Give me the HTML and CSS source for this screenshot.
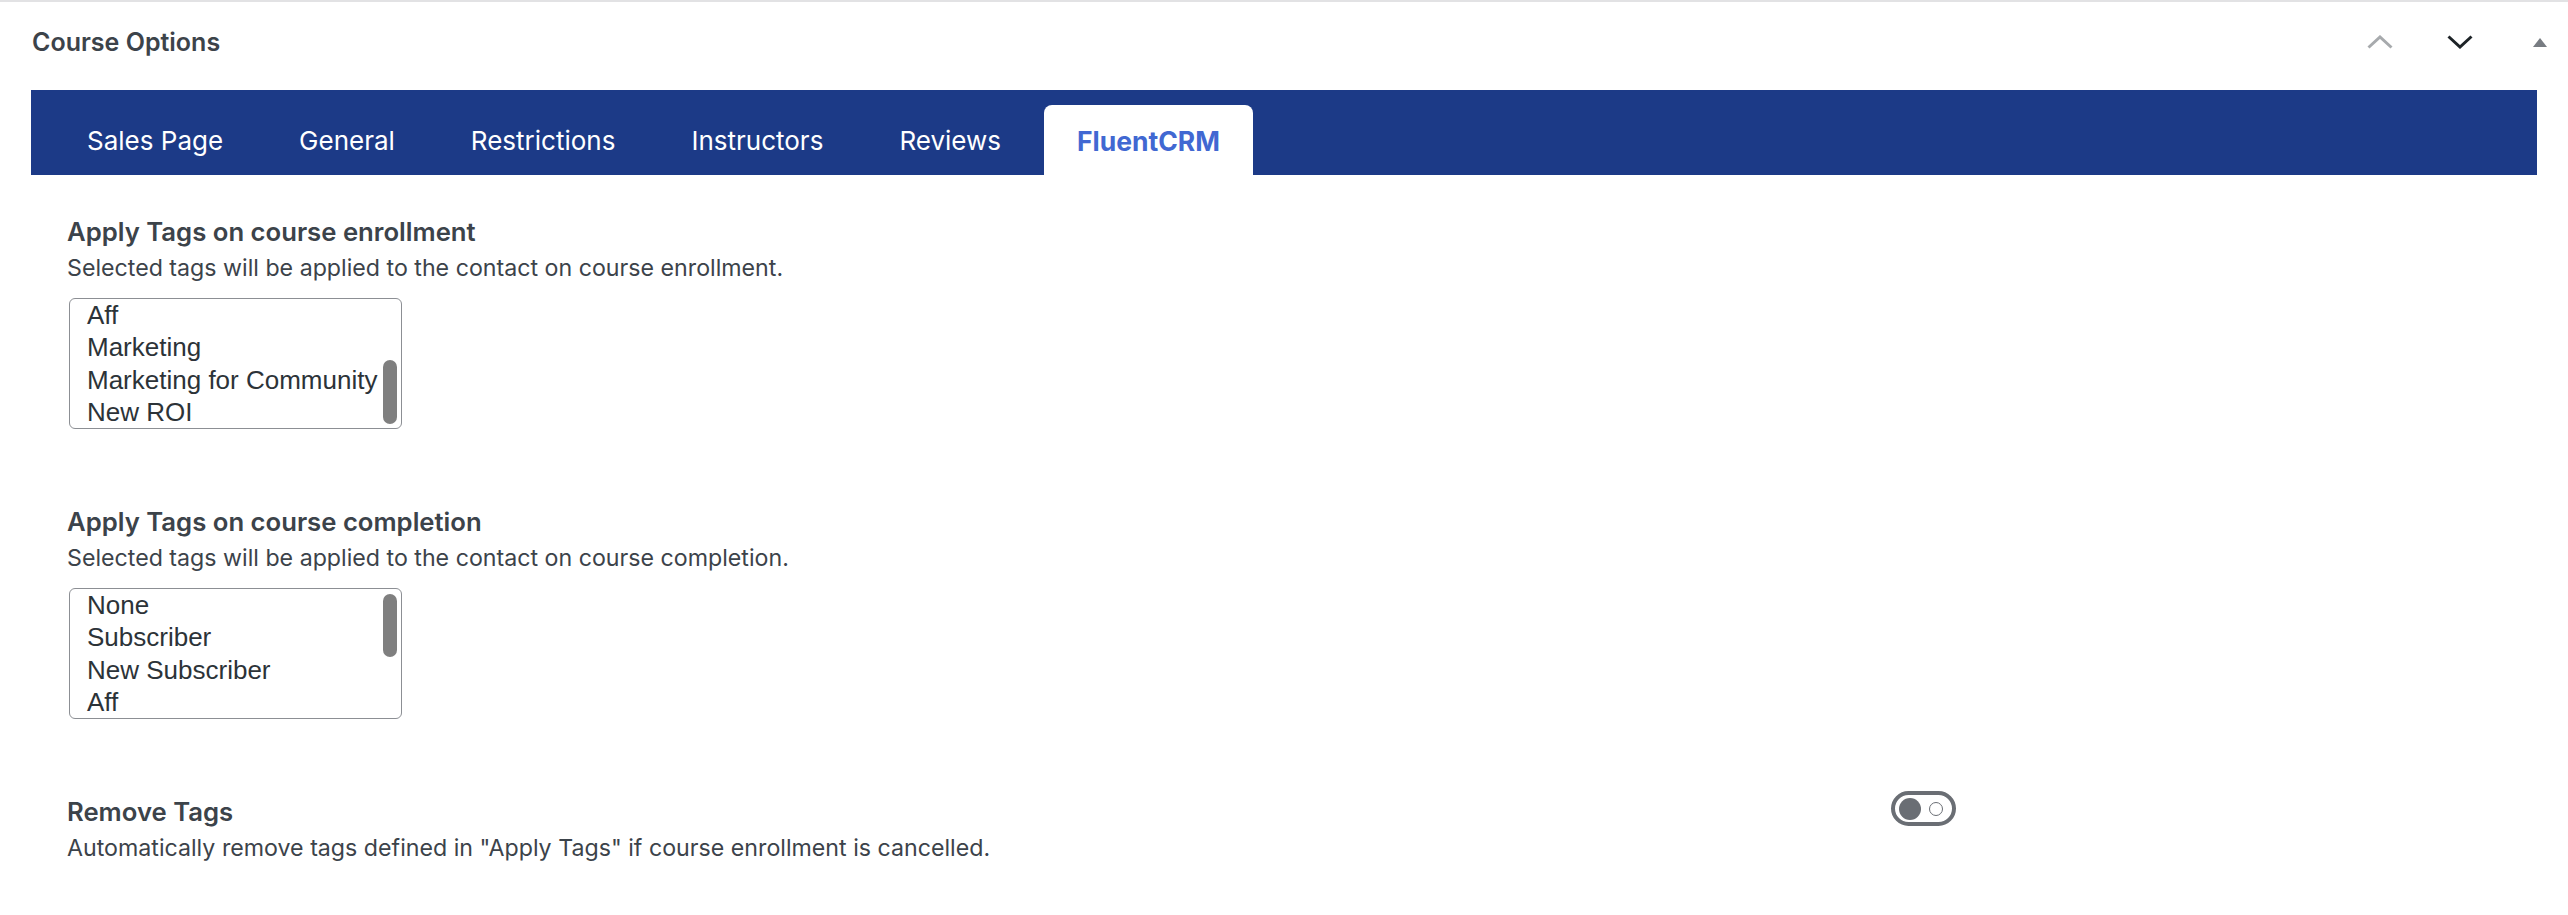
FILE: index.html
```html
<!DOCTYPE html>
<html lang="en">
<head>
<meta charset="utf-8">
<title>Course Options</title>
<link rel="stylesheet" href="styles.css">
</head>
<body>
<div class="postbox">
  <div class="postbox-header">
    <h2 class="hndle">Course Options</h2>
    <div class="handle-actions">
      <button class="handle-btn" type="button" aria-label="Move up">
        <svg width="26" height="14" viewBox="0 0 26 14"><path d="M1.5 12.5 L13 2 L24.5 12.5" fill="none" stroke="#a7aaad" stroke-width="3"/></svg>
      </button>
      <button class="handle-btn" type="button" aria-label="Move down">
        <svg width="26" height="14" viewBox="0 0 26 14"><path d="M1.5 1.5 L13 12 L24.5 1.5" fill="none" stroke="#1d2327" stroke-width="3"/></svg>
      </button>
      <button class="handle-btn" type="button" aria-label="Toggle panel">
        <svg width="14" height="9" viewBox="0 0 14 9"><path d="M0 9 L7 0 L14 9 Z" fill="#787c82"/></svg>
      </button>
    </div>
  </div>

  <div class="inside">
    <nav class="tabs">
      <a class="tab">Sales Page</a>
      <a class="tab">General</a>
      <a class="tab">Restrictions</a>
      <a class="tab">Instructors</a>
      <a class="tab">Reviews</a>
      <a class="tab active">FluentCRM</a>
    </nav>

    <div class="panel">
      <div class="field">
        <div class="field-main">
          <h3 class="field-title">Apply Tags on course enrollment</h3>
          <p class="field-desc">Selected tags will be applied to the contact on course enrollment.</p>
          <div class="listbox">
            <ul class="options">
              <li>Aff</li>
              <li>Marketing</li>
              <li>Marketing for Community</li>
              <li>New ROI</li>
            </ul>
            <span class="thumb" style="top:61px;height:64px"></span>
          </div>
        </div>
        <div class="field-side"></div>
      </div>

      <div class="field">
        <div class="field-main">
          <h3 class="field-title">Apply Tags on course completion</h3>
          <p class="field-desc">Selected tags will be applied to the contact on course completion.</p>
          <div class="listbox">
            <ul class="options">
              <li>None</li>
              <li>Subscriber</li>
              <li>New Subscriber</li>
              <li>Aff</li>
            </ul>
            <span class="thumb" style="top:5px;height:63px"></span>
          </div>
        </div>
        <div class="field-side"></div>
      </div>

      <div class="field">
        <div class="field-main">
          <h3 class="field-title">Remove Tags</h3>
          <p class="field-desc">Automatically remove tags defined in "Apply Tags" if course enrollment is cancelled.</p>
        </div>
        <div class="field-side">
          <span class="toggle" role="switch" aria-checked="false">
            <span class="toggle-knob"></span>
            <span class="toggle-ring"></span>
          </span>
        </div>
      </div>
    </div>
  </div>
</div>
</body>
</html>
```

FILE: styles.css
```css
* { box-sizing: border-box; }

html, body {
  margin: 0;
  padding: 0;
  background: #ffffff;
}

body {
  font-family: Inter, "Noto Sans", "Liberation Sans", sans-serif;
  color: #3c434a;
}

.postbox {
  border-top: 2px solid #e2e2e4;
}

/* Header row with the title and the move/collapse controls */
.postbox-header {
  height: 88px;
  display: flex;
  align-items: center;
  justify-content: space-between;
  padding: 0 0 8px 32px;
}

.hndle {
  margin: 0;
  font-size: 25px;
  font-weight: 600;
  color: #3c434a;
}

.handle-actions {
  display: flex;
  gap: 24px;
}

.handle-btn {
  width: 56px;
  height: 40px;
  padding: 0;
  border: 0;
  background: none;
  display: flex;
  align-items: center;
  justify-content: center;
}

.inside {
  padding: 0 31px;
}

/* Tab strip */
.tabs {
  height: 85px;
  background: #1c3a87;
  display: flex;
  align-items: flex-end;
  gap: 10px;
  padding: 0 23px;
}

.tab {
  height: 70px;
  line-height: 72px;
  padding: 0 33px;
  font-size: 26px;
  color: #ffffff;
  white-space: nowrap;
}

.tab.active {
  background: #ffffff;
  border-radius: 8px 8px 0 0;
  color: #4168d2;
  font-weight: 700;
  font-size: 26.5px;
}

/* Settings panel */
.panel {
  padding: 39px 36px 0;
}

.field {
  display: grid;
  grid-template-columns: 75% 25%;
  margin-bottom: 75px;
}

.field-title {
  margin: 0;
  font-size: 25.7px;
  line-height: 36px;
  font-weight: 600;
  color: #3c434a;
}

.field-desc {
  margin: 2px 0 0;
  font-size: 23.2px;
  line-height: 32px;
  color: #3c434a;
}

.listbox {
  position: relative;
  margin-top: 14px;
  margin-left: 2px;
  width: 333px;
  height: 131px;
  border: 1px solid #8c8f94;
  border-radius: 6px;
  overflow: hidden;
}

.options {
  list-style: none;
  margin: 0;
  padding: 0 0 0 17px;
  font-family: "Liberation Sans", Arial, sans-serif;
  font-size: 26px;
  line-height: 32.4px;
  color: #2c3338;
  white-space: nowrap;
}

.thumb {
  position: absolute;
  right: 4px;
  width: 14px;
  border-radius: 7px;
  background: #7f7f7f;
}

/* Off-state switch */
.toggle {
  display: inline-flex;
  align-items: center;
  justify-content: space-between;
  width: 65px;
  height: 35px;
  margin-top: -3px;
  margin-left: -2px;
  padding: 0 9px 0 4px;
  border: 4px solid #6a6e74;
  border-radius: 18px;
}

.toggle-knob {
  width: 22px;
  height: 22px;
  border-radius: 50%;
  background: #6a6e74;
}

.toggle-ring {
  width: 14px;
  height: 14px;
  border-radius: 50%;
  border: 1.5px solid #6a6e74;
}
```
